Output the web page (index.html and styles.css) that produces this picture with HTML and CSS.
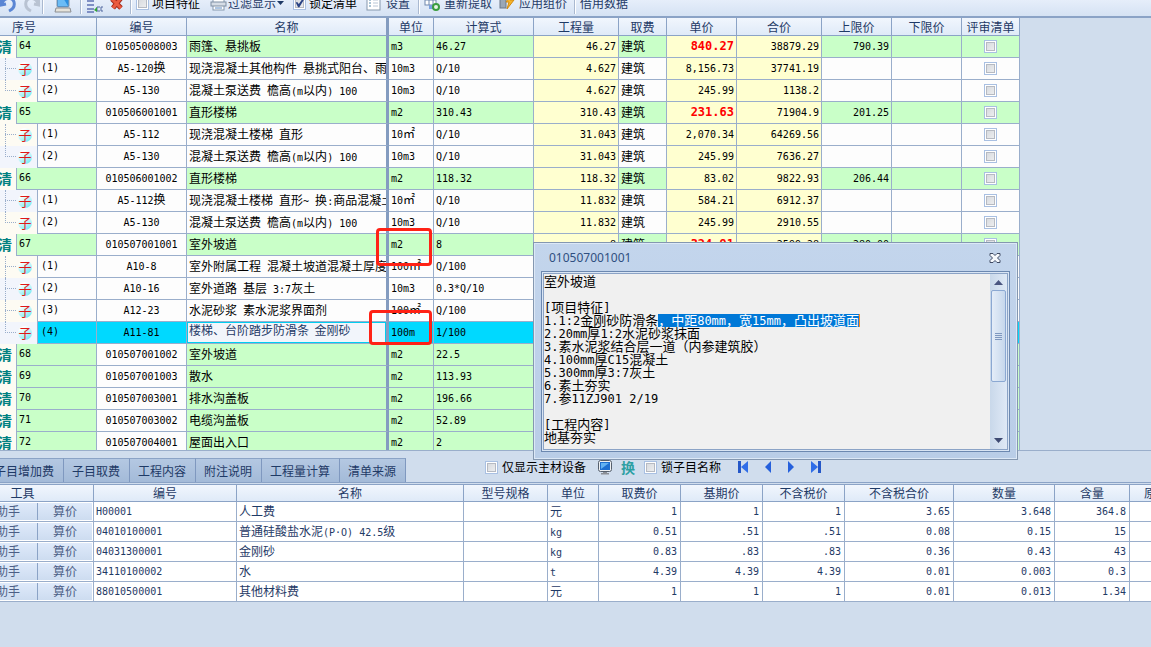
FILE: index.html
```html
<!DOCTYPE html>
<html lang="zh-CN">
<head>
<meta charset="utf-8">
<title>工程计价</title>
<link rel="stylesheet" href="styles.css">
</head>
<body>
<div class="app">
<header class="toolbar">
 <div class="tools">
  <button class="tool" aria-label="撤销"><svg width="17" height="20" viewBox="0 0 17 20"><path d="M1 6v6l5-1M2 11C3 5 12 3 14 9c1 4-1 7-5 9" fill="none" stroke="#5b86d4" stroke-width="3"/></svg></button>
  <button class="tool redo" aria-label="重做"><svg width="17" height="20" viewBox="0 0 17 20"><path d="M16 6v6l-5-1M15 11C14 5 5 3 3 9c-1 4 1 7 5 9" fill="none" stroke="#b9c3d2" stroke-width="3"/></svg></button>
  <i class="sep"></i>
  <button class="tool pc" aria-label="计算机"><svg width="18" height="20" viewBox="0 0 18 20"><rect x="3" y="1" width="12" height="13" rx="1" fill="#2b8fe0" stroke="#8a98a8"/><path d="M4 13h10L8 3H4z" fill="#6bbcf5"/><path d="M2 15h14l1 4H1z" fill="#e6e3da" stroke="#8d8f92"/></svg></button>
  <i class="sep"></i>
  <button class="tool list" aria-label="插入"><svg width="18" height="20" viewBox="0 0 18 20"><path d="M1 8h7M1 12h7M1 16h7M1 19h7" stroke="#7f8fc4" stroke-width="2"/><path d="M14 14h-3v4h3M17 14h-2v4h2" stroke="#53689f" fill="none"/><path d="M11 14v5l-3-2z" fill="#2fa52f"/></svg></button>
  <button class="tool del" aria-label="删除"><svg width="14" height="20" viewBox="0 0 14 20"><path d="M2 6l9 9M11 5l-8 10" stroke="#a32a1c" stroke-width="5"/><path d="M2 6l9 9M11 5l-8 10" stroke="#ea5a3e" stroke-width="3"/></svg></button>
  <i class="sep"></i>
  <label class="opt"><input type="checkbox">项目特征</label>
  <button class="tool filter"><svg width="17" height="18" viewBox="0 0 17 18"><rect x="3" y="1" width="11" height="15" fill="#fff" stroke="#8598ad"/><rect x="1" y="8" width="15" height="4" fill="#d6dde6" stroke="#7f8fa3"/><path d="M5 14h7" stroke="#5e8cc4"/></svg>过滤显示<svg width="7" height="5" viewBox="0 0 7 5"><path d="M0 0h7L3.500 4z" fill="#1f3a66"/></svg></button>
  <label class="opt lock"><input type="checkbox" checked>锁定清单</label>
  <button class="tool set"><svg width="16" height="18" viewBox="0 0 16 18"><rect x="1" y="1" width="13" height="15" fill="#fff" stroke="#8598ad"/><path d="M3 6h2M3 9h2M3 12h2" stroke="#58a"/><path d="M7 6h5M7 9h5M7 12h5" stroke="#b9c6d6"/></svg>设置</button>
  <i class="sep"></i>
  <button class="tool"><svg width="17" height="18" viewBox="0 0 17 18"><rect x="1" y="1" width="11" height="10" fill="#fff" stroke="#6f87ad"/><path d="M1 6h11M5 1v10M9 1v10" stroke="#6f87ad"/><path d="M5 11h6v4H5z" fill="#7aa0dd"/><circle cx="12" cy="13" r="3" fill="#e8f5e4" stroke="#3b9d3f" stroke-width="2"/></svg>重新提取</button>
  <button class="tool"><svg width="17" height="18" viewBox="0 0 17 18"><rect x="1" y="3" width="6" height="11" fill="#9aa7b6" stroke="#6a7787"/><path d="M12 1L7 8h3l-2 7 7-9h-4l4-5z" fill="#f7b42a" stroke="#d18b12"/></svg>应用组价</button>
  <i class="sep"></i>
  <button class="tool">借用数据</button>
 </div>
</header>

<main class="upper">
<table class="grid bill">
<colgroup><col class="w-no"><col class="w-code"><col class="w-name"><col class="w-unit"><col class="w-expr"><col class="w-qty"><col class="w-fee"><col class="w-price"><col class="w-total"><col class="w-lim"><col class="w-lim"><col class="w-chk"></colgroup>
<thead><tr><th>序号<th>编号<th>名称<th>单位<th>计算式<th>工程量<th>取费<th>单价<th>合价<th>上限价<th>下限价<th>评审清单</tr></thead>
<tbody>
<tr class="p"><td><div class="no"><b>清</b><span>64</span></div><td>010505008003<td>雨篷、悬挑板<td>m3<td>46.27<td>46.27<td>建筑<td><strong>840.27</strong><td>38879.29<td>790.39<td><td><input type="checkbox" aria-label="评审 64"></tr>
<tr class="c odd"><td><div class="no"><i class="br"></i><em>子</em><span>(1)</span></div><td>A5-120<span class="c">换</span><td>现浇混凝土其他构件<span class="n"> </span>悬挑式阳台、雨<td>10m3<td>Q/10<td>4.627<td>建筑<td>8,156.73<td>37741.19<td><td><td><input type="checkbox" aria-label="评审 64-1"></tr>
<tr class="c last"><td><div class="no"><i class="br"></i><em>子</em><span>(2)</span></div><td>A5-130<td>混凝土泵送费<span class="n"> </span>檐高<span class="n">(m</span>以内<span class="n">) 100</span><td>10m3<td>Q/10<td>4.627<td>建筑<td>245.99<td>1138.2<td><td><td><input type="checkbox" aria-label="评审 64-2"></tr>
<tr class="p"><td><div class="no"><b>清</b><span>65</span></div><td>010506001001<td>直形楼梯<td>m2<td>310.43<td>310.43<td>建筑<td><strong>231.63</strong><td>71904.9<td>201.25<td><td><input type="checkbox" aria-label="评审 65"></tr>
<tr class="c"><td><div class="no"><i class="br"></i><em>子</em><span>(1)</span></div><td>A5-112<td>现浇混凝土楼梯<span class="n"> </span>直形<td>10<span class="c">㎡</span><td>Q/10<td>31.043<td>建筑<td>2,070.34<td>64269.56<td><td><td><input type="checkbox" aria-label="评审 65-1"></tr>
<tr class="c odd last"><td><div class="no"><i class="br"></i><em>子</em><span>(2)</span></div><td>A5-130<td>混凝土泵送费<span class="n"> </span>檐高<span class="n">(m</span>以内<span class="n">) 100</span><td>10m3<td>Q/10<td>31.043<td>建筑<td>245.99<td>7636.27<td><td><td><input type="checkbox" aria-label="评审 65-2"></tr>
<tr class="p"><td><div class="no"><b>清</b><span>66</span></div><td>010506001002<td>直形楼梯<td>m2<td>118.32<td>118.32<td>建筑<td>83.02<td>9822.93<td>206.44<td><td><input type="checkbox" aria-label="评审 66"></tr>
<tr class="c odd"><td><div class="no"><i class="br"></i><em>子</em><span>(1)</span></div><td>A5-112<span class="c">换</span><td>现浇混凝土楼梯<span class="n"> </span>直形<span class="n">~ </span>换<span class="n">:</span>商品混凝土<td>10<span class="c">㎡</span><td>Q/10<td>11.832<td>建筑<td>584.21<td>6912.37<td><td><td><input type="checkbox" aria-label="评审 66-1"></tr>
<tr class="c last"><td><div class="no"><i class="br"></i><em>子</em><span>(2)</span></div><td>A5-130<td>混凝土泵送费<span class="n"> </span>檐高<span class="n">(m</span>以内<span class="n">) 100</span><td>10m3<td>Q/10<td>11.832<td>建筑<td>245.99<td>2910.55<td><td><td><input type="checkbox" aria-label="评审 66-2"></tr>
<tr class="p"><td><div class="no"><b>清</b><span>67</span></div><td>010507001001<td>室外坡道<td>m2<td>8<td>8<td>建筑<td><strong>324.91</strong><td>2599.28<td>280.00<td><td><input type="checkbox" aria-label="评审 67"></tr>
<tr class="c"><td><div class="no"><i class="br"></i><em>子</em><span>(1)</span></div><td>A10-8<td>室外附属工程<span class="n"> </span>混凝土坡道混凝土厚度<td>100<span class="c">㎡</span><td>Q/100<td><td><td><td><td><td><td></tr>
<tr class="c odd"><td><div class="no"><i class="br"></i><em>子</em><span>(2)</span></div><td>A10-16<td>室外道路<span class="n"> </span>基层<span class="n"> 3:7</span>灰土<td>10m3<td>0.3*Q/10<td><td><td><td><td><td><td></tr>
<tr class="c"><td><div class="no"><i class="br"></i><em>子</em><span>(3)</span></div><td>A12-23<td>水泥砂浆<span class="n"> </span>素水泥浆界面剂<td>100<span class="c">㎡</span><td>Q/100<td><td><td><td><td><td><td></tr>
<tr class="c odd last sel"><td><div class="no"><i class="br"></i><em>子</em><span>(4)</span></div><td>A11-81<td class="edit"><input type="text" aria-label="名称" value="楼梯、台阶踏步防滑条  金刚砂"><td>100m<td>1/100<td><td><td><td><td><td><td></tr>
<tr class="p"><td><div class="no"><b>清</b><span>68</span></div><td>010507001002<td>室外坡道<td>m2<td>22.5<td><td><td><td><td><td><td></tr>
<tr class="p"><td><div class="no"><b>清</b><span>69</span></div><td>010507001003<td>散水<td>m2<td>113.93<td><td><td><td><td><td><td></tr>
<tr class="p"><td><div class="no"><b>清</b><span>70</span></div><td>010507003001<td>排水沟盖板<td>m2<td>196.66<td><td><td><td><td><td><td></tr>
<tr class="p"><td><div class="no"><b>清</b><span>71</span></div><td>010507003002<td>电缆沟盖板<td>m2<td>52.89<td><td><td><td><td><td><td></tr>
<tr class="p"><td><div class="no"><b>清</b><span>72</span></div><td>010507004001<td>屋面出入口<td>m2<td>2<td><td><td><td><td><td><td></tr>
</tbody>
</table>
</main>

<section class="lower">
<div class="bar">
 <nav class="tabs"><button>子目增加费</button><button>子目取费</button><button>工程内容</button><button>附注说明</button><button>工程量计算</button><button>清单来源</button></nav>
 <div class="actions">
  <label class="opt"><input type="checkbox">仅显示主材设备</label>
  <button class="ico mon" aria-label="屏幕"><svg width="14" height="15" viewBox="0 0 14 15"><rect x="0.500" y="0.500" width="13" height="11" rx="2" fill="#eef0f2" stroke="#555f6c"/><rect x="2" y="2" width="10" height="8" fill="#1e6fd0"/><path d="M3 9V3h8z" fill="#63b2f2"/><path d="M5 12h4v1h2v1.500H3V13h2z" fill="#8b8f96"/></svg></button>
  <button class="ico swap">换</button>
  <label class="opt"><input type="checkbox">锁子目名称</label>
  <button class="ico first" aria-label="首条"><svg width="11" height="12" viewBox="0 0 11 12"><rect x="0" y="0" width="3" height="12" fill="#2457c8"/><path d="M10 0v12L3 6z" fill="#2f6de8"/></svg></button>
  <button class="ico prev" aria-label="上一条"><svg width="7" height="12" viewBox="0 0 7 12"><path d="M6 0v12L0 6z" fill="#2560dc"/></svg></button>
  <button class="ico next" aria-label="下一条"><svg width="7" height="12" viewBox="0 0 7 12"><path d="M0 0v12l6-6z" fill="#2560dc"/></svg></button>
  <button class="ico end" aria-label="末条"><svg width="11" height="12" viewBox="0 0 11 12"><rect x="7" y="0" width="3" height="12" fill="#2457c8"/><path d="M0 0v12l7-6z" fill="#2f6de8"/></svg></button>
 </div>
</div>
<table class="grid mat">
<colgroup><col class="m-tool"><col class="m-code"><col class="m-name"><col class="m-spec"><col class="m-unit"><col class="m-p"><col class="m-p"><col class="m-p"><col class="m-sum"><col class="m-qty"><col class="m-con"><col class="m-raw"></colgroup>
<thead><tr><th>工具<th>编号<th>名称<th>型号规格<th>单位<th>取费价<th>基期价<th>不含税价<th>不含税合价<th>数量<th>含量<th>原</tr></thead>
<tbody>
<tr><td><div class="btns"><button>助手</button><button>算价</button></div><td>H00001<td>人工费<td><td>元<td>1<td>1<td>1<td>3.65<td>3.648<td>364.8<td></tr>
<tr><td><div class="btns"><button>助手</button><button>算价</button></div><td>04010100001<td>普通硅酸盐水泥<span class="n">(P·O) 42.5</span>级<td><td><span class="n">kg</span><td>0.51<td>.51<td>.51<td>0.08<td>0.15<td>15<td></tr>
<tr><td><div class="btns"><button>助手</button><button>算价</button></div><td>04031300001<td>金刚砂<td><td><span class="n">kg</span><td>0.83<td>.83<td>.83<td>0.36<td>0.43<td>43<td></tr>
<tr><td><div class="btns"><button>助手</button><button>算价</button></div><td>34110100002<td>水<td><td><span class="n">t</span><td>4.39<td>4.39<td>4.39<td>0.01<td>0.003<td>0.3<td></tr>
<tr><td><div class="btns"><button>助手</button><button>算价</button></div><td>88010500001<td>其他材料费<td><td>元<td>1<td>1<td>1<td>0.01<td>0.013<td>1.34<td></tr>
</tbody>
</table>
</section>

<div class="mark mark-a"></div>
<div class="mark mark-b"></div>

<div class="dialog" role="dialog" aria-label="010507001001">
 <div class="dhead"><span>010507001001</span><button aria-label="关闭"><svg width="12" height="10" viewBox="0 0 12 10"><path d="M1 .5h3l2 2 2-2h3v2L8.500 5 11 7.500v2H8l-2-2-2 2H1v-2L3.500 5 1 2.500z" fill="#f6f9fd" stroke="#3f4a63"/></svg></button></div>
 <div class="dbody">
  <div class="text" role="textbox" aria-multiline="true" tabindex="0">
   <p>室外坡道</p>
   <p></p>
   <p><span>[</span>项目特征<span>]</span></p>
   <p><span>1.1:2</span>金刚砂防滑条<mark>，中距<span>80mm</span>，宽<span>15mm</span>，凸出坡道面</mark></p>
   <p><span>2.20mm</span>厚<span>1:2</span>水泥砂浆抹面</p>
   <p><span>3.</span>素水泥浆结合层一道（内参建筑胶）</p>
   <p><span>4.100mm</span>厚<span>C15</span>混凝土</p>
   <p><span>5.300mm</span>厚<span>3:7</span>灰土</p>
   <p><span>6.</span>素土夯实</p>
   <p><span>7.</span>参<span>11ZJ901 2/19</span></p>
   <p></p>
   <p><span>[</span>工程内容<span>]</span></p>
   <p>地基夯实</p>
  </div>
  <div class="scroll">
   <svg width="9" height="5" viewBox="0 0 9 5"><path d="M4.500 0L9 5H0z" fill="#4a5580"/></svg>
   <div class="thumb"><i></i><i></i><i></i><i></i></div>
   <svg width="9" height="5" viewBox="0 0 9 5"><path d="M0 0h9L4.500 5z" fill="#3e4a72"/></svg>
  </div>
 </div>
</div>
</div>
</body>
</html>
```
FILE: styles.css
```css
* { box-sizing: border-box; }
body { margin: 0; background: #d0dded; color: #000; font: 12px/16px "Noto Sans CJK SC", "Liberation Sans", sans-serif; }
button { font: inherit; color: inherit; border: 0; background: none; padding: 0; white-space: nowrap; }
p { margin: 0; }
svg { display: block; flex: none; }
.app { position: relative; height: 100vh; display: flex; flex-direction: column; overflow: hidden; }

input[type="checkbox"] { appearance: none; flex: none; width: 13px; height: 13px; margin: 0; border: 1px solid #a9c0e2; background: linear-gradient(135deg, #d3d6db, #f1f2f3); box-shadow: inset 0 0 0 1px #fff, inset 0 0 0 2px #b6bac2; }
.tools input:checked::before { content: ""; display: block; width: 9px; height: 9px; margin: 1px; background: #2a4384; clip-path: polygon(8% 45%, 24% 38%, 42% 62%, 84% 2%, 100% 12%, 48% 98%, 34% 98%); }

.toolbar { flex: none; height: 18px; overflow: hidden; background: linear-gradient(#e6eefa, #d5e2f3); border-bottom: 2px solid #8ba3c6; }
.tools { display: flex; align-items: center; height: 26px; margin-top: -10px; }
.tool { display: flex; align-items: center; gap: 3px; color: #1f3a66; margin-right: 7px; flex: none; }
.tool:first-child { margin-right: 6px; }
.tool.redo { margin-right: 2px; }
.tool.pc { margin: 0 8px 0 6px; }
.tool.list, .tool.del { margin-right: 6px; }
.tool.filter { margin-left: 10px; gap: 1px; margin-right: 9px; }
.tool.set { margin-left: 9px; gap: 4px; margin-right: 8px; }
.sep { width: 2px; height: 22px; flex: none; margin-right: 4px; background: #aab9d0; border-right: 1px solid #fff; }
.opt { display: flex; align-items: center; gap: 3px; flex: none; }

.upper { flex: 1 1 0; min-height: 0; overflow: hidden; border-bottom: 1px solid #9aaecb; }
.grid { table-layout: fixed; border-collapse: separate; border-spacing: 0; margin-left: -48px; }
.grid th { font-weight: 400; color: #1f3a66; padding: 0; background: linear-gradient(#f1f6fd, #dfeaf8); border-right: 1px solid #8ba3c6; border-bottom: 1px solid #8ba3c6; overflow: hidden; white-space: nowrap; }
.grid td { padding: 0 2px; border-right: 1px solid #9aaecb; border-bottom: 1px solid #9aaecb; overflow: hidden; white-space: nowrap; }
.n { font: 10px/12px "DejaVu Sans Mono", monospace; }
.c { font: 12px/12px "Noto Sans CJK SC", sans-serif; }

.bill { width: 1068px; }
.w-no { width: 145px; } .w-code { width: 90px; } .w-name { width: 202px; } .w-unit { width: 45px; }
.w-expr { width: 100px; } .w-qty { width: 85px; } .w-fee { width: 48px; } .w-price { width: 70px; }
.w-total { width: 85px; } .w-lim { width: 70px; } .w-chk { width: 58px; }
.bill th { height: 18px; line-height: 17px; }
.bill td { height: 22px; line-height: 18px; padding-bottom: 2px; background: #fdfdfd; }
.bill th:nth-child(3), .bill td:nth-child(3) { border-right: 3px solid #849cc0; }
.bill td:nth-child(1), .bill td:nth-child(2), .bill td:nth-child(n+4) { font: 10px/20px "DejaVu Sans Mono", monospace; padding-bottom: 0; }
.bill td:nth-child(7) { font: 12px/18px "Noto Sans CJK SC", sans-serif; padding-bottom: 2px; }
.bill td:nth-child(2), .bill td:nth-child(12) { text-align: center; }
.bill td:nth-child(6), .bill td:nth-child(n+8):nth-child(-n+11) { text-align: right; }
.bill td input[type="checkbox"] { display: block; margin: 0 auto; }
.bill .p td:nth-child(n+3) { background: #c9ffc8; }
.bill tbody tr td:nth-child(6), .bill tbody tr td:nth-child(8), .bill tbody tr td:nth-child(9),
.bill .p td:nth-child(6), .bill .p td:nth-child(8), .bill .p td:nth-child(9) { background: #ffffd0; }
.bill strong { color: #f00; font-size: 12px; line-height: 12px; }
.bill td:first-child { padding: 0; border-bottom: 0; }
.no { display: flex; height: 22px; padding-left: 46px; background: #fdfbf3; }
.odd .no { background: #f2f5fc; }
.no b { width: 18px; flex: none; font: 700 14px/21px "Noto Sans CJK SC", sans-serif; color: #008080; }
.no span { flex: 1; border-left: 1px solid #9aaecb; border-bottom: 1px solid #9aaecb; padding-left: 2px; background: #fdfdfd; line-height: 20px; }
.p .no span { background: #c9ffc8; }
.c .no { line-height: 20px; }
.c .no span { padding-left: 3px; }
.no em { width: 14px; height: 14px; margin: 4px 5px 0 2px; flex: none; border-radius: 7px; background: linear-gradient(150deg, #fff 20%, #5fe6f2); color: #e01818; font: 400 13px/13px "Noto Sans CJK SC", sans-serif; text-align: center; }
.br { width: 18px; flex: none; position: relative; }
.br::before, .br::after { content: ""; position: absolute; left: 7px; border-color: #9aaecb; border-style: dotted; border-width: 0; }
.br::before { top: 0; height: 22px; border-left-width: 1px; }
.last .br::before { height: 11px; }
.br::after { top: 10px; width: 11px; border-top-width: 1px; }
.bill tbody .sel td:nth-child(n), .sel .no span { background: #00d9ff; }
.bill tbody .sel .edit:nth-child(3) { background: #f2f5fb; padding: 0; }
.edit input { display: block; width: 100%; height: 21px; padding: 0 0 6px 1px; border: 1px solid #00cdf0; background: #f2f5fb; font: 12px/14px "Noto Sans CJK SC", sans-serif; color: #1f3a66; }

.lower { flex: none; padding-bottom: 45px; }
.bar { display: flex; height: 32px; margin-bottom: 1px; align-items: flex-end; border-bottom: 1px solid #8ba3c6; }
.tabs { display: flex; margin-left: -16px; color: #1f3a66; flex: none; }
.tabs button { height: 24px; padding: 1px 9px 0 8px; border-right: 1px solid #7f98bf; border-top: 1px solid #8ba3c6; background: linear-gradient(#b4c8e2, #a3bad8); }
.tabs button:first-child { padding-left: 10px; }
.actions { display: flex; align-items: center; height: 30px; margin-left: 79px; }
.bar .opt { gap: 4px; }
.ico { flex: none; }
.mon { margin: 0 9px 0 12px; }
.swap { font-size: 14px; font-weight: 700; color: #2c9fa3; margin-right: 9px; }
.first { margin-left: 17px; }
.prev, .next, .end { margin-left: 16px; }

.mat { width: 1238px; color: #1f3a66; border-top: 1px solid #8ba3c6; }
.m-tool { width: 142px; } .m-code { width: 143px; } .m-name { width: 227px; } .m-spec { width: 84px; }
.m-unit { width: 51px; } .m-p { width: 82px; } .m-sum { width: 109px; } .m-qty { width: 101px; } .m-con { width: 75px; } .m-raw { width: 60px; }
.mat th { height: 17px; line-height: 16px; }
.mat th:last-child { text-align: left; padding-left: 14px; }
.mat td { height: 20px; line-height: 17px; background: #fff; padding: 0 3px 2px 2px; }
.mat td:nth-child(2), .mat td:nth-child(n+6) { font: 10px/18px "DejaVu Sans Mono", monospace; padding-bottom: 0; }
.mat td:nth-child(n+6) { text-align: right; }
.mat td:first-child { padding: 0 1px; }
.btns { display: flex; height: 17px; color: #4d5f86; background: linear-gradient(#dfeafa, #cddcf0); }
.btns button { line-height: 15px; padding-bottom: 2px; }
.btns button:first-child { flex: 1; text-align: right; padding-right: 17px; border-right: 1px solid #8ba3c6; }
.btns button:last-child { width: 54px; }

.mark { position: absolute; border: 3px solid #ff2216; border-radius: 4px; }
.mark-a { left: 376px; top: 228px; width: 56px; height: 38px; }
.mark-b { left: 369px; top: 310px; width: 63px; height: 35px; }

.dialog { position: absolute; left: 533px; top: 242px; width: 485px; height: 218px; padding: 0 7px 7px; display: flex; flex-direction: column; background: linear-gradient(#c3d5ec, #b9cde7); border: 1px solid #8497b0; box-shadow: inset 0 0 0 1px #dce8f6; }
.dhead { display: flex; justify-content: space-between; align-items: center; height: 28px; padding: 2px 9px 0 8px; font: 12px/16px "Noto Sans", sans-serif; color: #2f4f80; }
.dbody { flex: 1; min-height: 0; display: flex; border: 1px solid #6c88b0; outline: 1px solid #d9e5f4; outline-offset: -2px; box-shadow: inset 0 0 0 2px #8ba3c6; padding: 2px; background: #f0f0f0; }
.text { flex: 1; padding: 1px 0 0; overflow: hidden; font: 13px/11px "Noto Sans CJK SC", sans-serif; white-space: nowrap; }
.text p { height: 13px; }
.text span { font: 12px/11px "DejaVu Sans Mono", monospace; }
.text mark { display: inline-block; vertical-align: top; height: 13px; background: #0078d7; color: #fff; border-right: 1px solid #ff8c1a; }
.scroll { width: 17px; display: flex; flex-direction: column; align-items: center; padding: 6px 0; background: linear-gradient(90deg, #c9d8ea, #dfe9f6); }
.thumb { width: 15px; height: 92px; margin: 5px 0 auto; border: 1px solid #8ba8d2; border-radius: 2px; background: linear-gradient(90deg, #e4edf8, #c6d7ec); display: flex; flex-direction: column; align-items: center; justify-content: center; gap: 1px; }
.thumb i { width: 7px; height: 1px; background: #7f98bf; }
```
